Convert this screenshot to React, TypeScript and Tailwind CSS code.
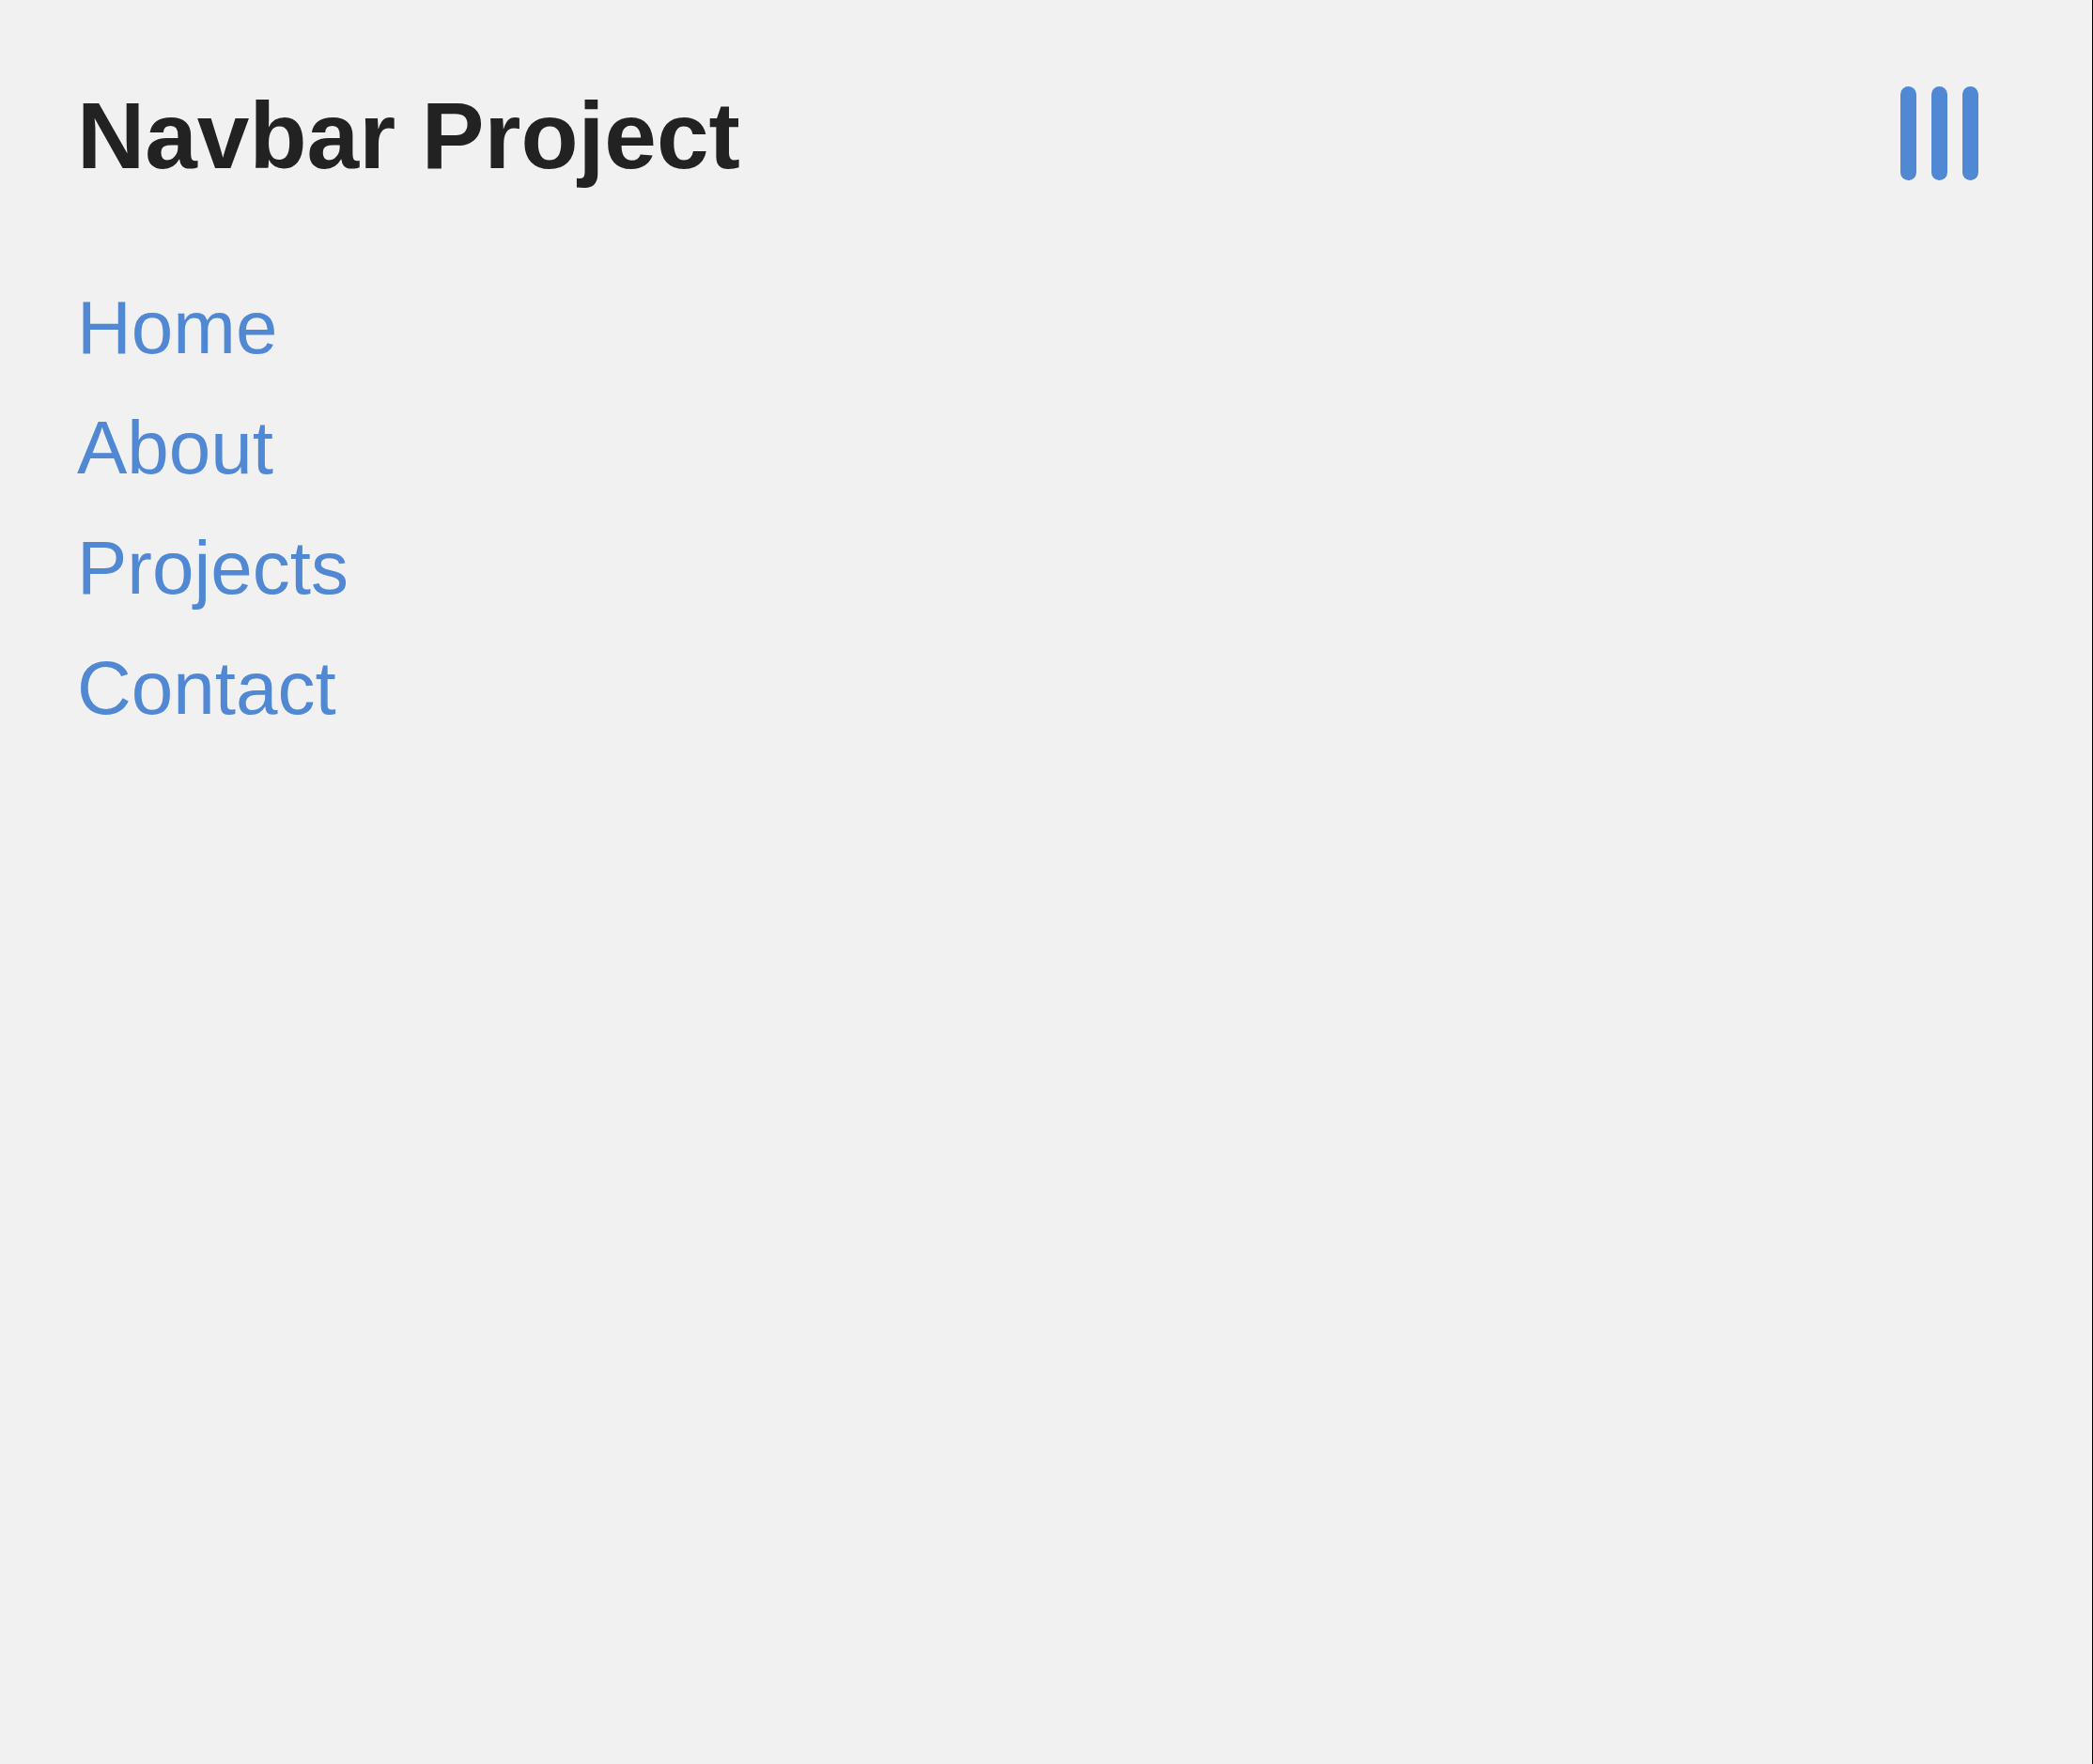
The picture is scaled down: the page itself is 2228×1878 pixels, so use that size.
export default function App() {
  const links = ["Home", "About", "Projects", "Contact"];

  return (
    <div className="min-h-screen w-full bg-[#f1f1f1] border-r border-black font-['Liberation_Sans',Arial,sans-serif]">
      <header className="flex items-start justify-between pl-[82px] pr-[121px] pt-[87px]">
        <h1 className="text-[100px] leading-[115px] font-bold text-[#222222]">Navbar Project</h1>
        {/* menu toggle, three rounded bars */}
        <button type="button" aria-label="Menu" className="mt-[5px] flex gap-[16px] cursor-pointer">
          <span className="block w-[17px] h-[100px] rounded-full bg-[#5088d3]" />
          <span className="block w-[17px] h-[100px] rounded-full bg-[#5088d3]" />
          <span className="block w-[17px] h-[100px] rounded-full bg-[#5088d3]" />
        </button>
      </header>
      <ul className="mt-[83px] pl-[82px]">
        {links.map((link) => (
          <li key={link} className="text-[80px] leading-[128px]">
            <a href="#" className="text-[#5088d3]">
              {link}
            </a>
          </li>
        ))}
      </ul>
    </div>
  );
}
